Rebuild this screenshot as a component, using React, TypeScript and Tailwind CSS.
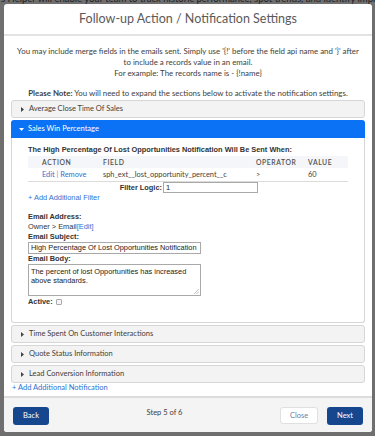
import React from "react";

const lato = { fontFamily: "Lato, 'Open Sans', sans-serif" };
const arial = { fontFamily: "'Liberation Sans', Arial, sans-serif" };

function Tri({ down = false, white = false }: { down?: boolean; white?: boolean }) {
  return (
    <svg width="5" height="5" viewBox="0 0 5 5" className="shrink-0">
      {down ? (
        <polygon points="0,1 5,1 2.5,4" fill={white ? "#fff" : "#444"} />
      ) : (
        <polygon points="1,0 4,2.5 1,5" fill={white ? "#fff" : "#444"} />
      )}
    </svg>
  );
}

function CollapsedRow({ title }: { title: string }) {
  return (
    <div className="flex h-[18px] items-center gap-[4px] rounded-[3px] border border-[#d6d6d6] bg-[#f3f3f3] pl-[8px] text-[7.5px] text-[#3e3e3c]">
      <Tri />
      <span>{title}</span>
    </div>
  );
}

export default function App() {
  return (
    <div className="relative h-[436px] w-[375px] overflow-hidden bg-[#6f6f6f]" style={lato}>
      <div className="-mt-[6px] whitespace-nowrap pl-[1px] text-[9.5px] leading-[10px] text-[#1e1e1e]">
        s Helper will enable your team to track historic performance, spot trends, and identify improvement opportunities
      </div>

      <div className="absolute left-[4px] top-[4px] flex h-[428px] w-[368px] flex-col overflow-hidden rounded-[3px] bg-white">
        {/* Header */}
        <div className="flex h-[32px] shrink-0 items-center justify-center border-b-2 border-[#e3e3e3] text-[12.5px] text-[#5a5a5a]">
          Follow-up Action / Notification Settings
        </div>

        {/* Body */}
        <div className="flex flex-1 flex-col px-[7px] pt-[10px] text-[#3e3e3c]">
          <div className="flex flex-col items-center whitespace-nowrap text-[7.9px] leading-[11px]">
            <div>You may include merge fields in the emails sent. Simply use '{"{!"}' before the field api name and '{"}"}' after</div>
            <div>to include a records value in an email.</div>
            <div>For example: The records name is - {"{!name}"}</div>
            <div className="mt-[9px]">
              <span className="font-bold">Please Note:</span> You will need to expand the sections below to activate the notification settings.
            </div>
          </div>

          <div className="mt-[1px] flex flex-col gap-[2px]">
            <CollapsedRow title="Average Close Time Of Sales" />

            <div className="flex flex-col">
              <div className="flex h-[18px] items-center gap-[4px] rounded-t-[3px] bg-[#0b72f6] pl-[8px] text-[7.5px] text-white">
                <Tri down white />
                <span>Sales Win Percentage</span>
              </div>
              <div className="flex h-[185px] flex-col rounded-b-[3px] border border-t-0 border-[#d6d6d6] px-[16px] pt-[7px] text-[7.4px] leading-[10px]" style={arial}>
                <div className="font-bold text-[#333]">The High Percentage Of Lost Opportunities Notification Will Be Sent When:</div>
                <div className="mt-[1px] grid h-[12px] grid-cols-[61px_153px_52px_1fr] items-center bg-[#f4f6f9] pl-[14px] text-[6.8px] font-semibold tracking-[0.6px] text-[#4f4f4f]" style={lato}>
                  <span>ACTION</span>
                  <span>FIELD</span>
                  <span>OPERATOR</span>
                  <span>VALUE</span>
                </div>
                <div className="grid h-[14px] grid-cols-[61px_153px_52px_1fr] items-center border-b border-[#dddbda] pl-[14px] text-[7.4px] text-[#3e3e3c]" style={lato}>
                  <span className="text-[#2e72d2]">
                    Edit <span className="text-[#8a8a8a]">|</span> Remove
                  </span>
                  <span>sph_ext__lost_opportunity_percent__c</span>
                  <span>&gt;</span>
                  <span>60</span>
                </div>
                <div className="flex h-[11px] items-center">
                  <span className="w-[134px] text-right font-bold text-[#333]">Filter Logic:</span>
                  <span className="ml-[1px] flex h-[11px] w-[95px] items-center border border-[#a9a9a9] pl-[2px] text-[#222]">1</span>
                </div>
                <div className="text-[#2e72d2]">+ Add Additional Filter</div>
                <div className="mt-[9px] font-bold text-[#333]">Email Address:</div>
                <div className="text-[#333]">
                  Owner &gt; Email<span className="text-[#2e72d2]">[Edit]</span>
                </div>
                <div className="font-bold text-[#333]">Email Subject:</div>
                <div className="flex h-[12px] w-[173px] items-center border border-[#a9a9a9] pl-[2px] text-[#222]">
                  High Percentage Of Lost Opportunities Notification
                </div>
                <div className="font-bold text-[#333]">Email Body:</div>
                <div className="relative h-[32px] w-[173px] border border-[#a9a9a9] px-[2px] pt-[2px] leading-[9px] text-[#222]">
                  The percent of lost Opportunities has increased above standards.
                  <svg width="5" height="5" viewBox="0 0 5 5" className="absolute bottom-[1px] right-[1px]">
                    <line x1="0" y1="5" x2="5" y2="0" stroke="#999" strokeWidth="0.6" />
                    <line x1="2.5" y1="5" x2="5" y2="2.5" stroke="#999" strokeWidth="0.6" />
                  </svg>
                </div>
                <div className="mt-[1px] flex items-center gap-[3px] font-bold text-[#333]">
                  <span>Active:</span>
                  <span className="h-[6px] w-[6px] rounded-[1px] border border-[#aaa] bg-[#f5f5f5]" />
                </div>
              </div>
            </div>

            <CollapsedRow title="Time Spent On Customer Interactions" />
            <CollapsedRow title="Quote Status Information" />
            <CollapsedRow title="Lead Conversion Information" />
          </div>

          <div className="pl-[1px] text-[7.5px] leading-[10px] text-[#2e72d2]">+ Add Additional Notification</div>
        </div>

        {/* Footer */}
        <div className="flex h-[36px] shrink-0 items-start border-t-2 border-[#dcdcdc] bg-[#f4f4f4] px-[9px] pt-[9px] text-[7.5px]">
          <button className="h-[18px] w-[36px] rounded-[3px] bg-[#16478e] text-white">Back</button>
          <div className="flex-1 pt-[1px] text-center leading-[10px] text-[#3e3e3c]">Step 5 of 6</div>
          <button className="h-[17px] w-[38px] rounded-[3px] border border-[#e0e0e0] bg-white text-[#6f7ea0]">Close</button>
          <button className="ml-[9px] h-[18px] w-[36px] rounded-[3px] bg-[#16478e] text-white">Next</button>
        </div>
      </div>
    </div>
  );
}
